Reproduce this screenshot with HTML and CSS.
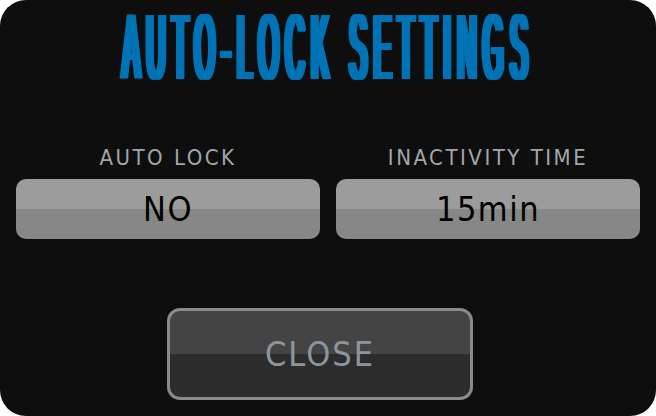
FILE: index.html
```html
<!DOCTYPE html>
<html>
<head>
<meta charset="utf-8">
<link rel="stylesheet" href="styles.css">
</head>
<body>
<div class="panel">
  <h1 class="title">
    <svg class="title-svg" width="656" height="89" viewBox="0 0 656 89">
      <defs>
        <filter id="widen" x="-5%" y="-10%" width="110%" height="120%">
          <feMorphology operator="dilate" radius="2.75 0"/>
        </filter>
      </defs>
      <text class="title-text" x="328.4" y="79.2" text-anchor="middle" textLength="412" lengthAdjust="spacingAndGlyphs" filter="url(#widen)">AUTO-LOCK SETTINGS</text>
    </svg>
  </h1>
  <div class="fields">
    <div class="field">
      <div class="label">AUTO LOCK</div>
      <div class="value">NO</div>
    </div>
    <div class="field">
      <div class="label">INACTIVITY TIME</div>
      <div class="value">15min</div>
    </div>
  </div>
  <div class="actions">
    <button class="close">CLOSE</button>
  </div>
</div>
</body>
</html>
```
FILE: styles.css
```css
html, body {
  margin: 0;
  padding: 0;
  background: #ffffff;
}
.panel {
  width: 656px;
  height: 416px;
  box-sizing: border-box;
  background: #0e0e0e;
  border-radius: 26px;
  overflow: hidden;
  display: flex;
  flex-direction: column;
}
.title {
  margin: 0;
  height: 89px;
  line-height: 0;
}
.title-svg {
  display: block;
}
.title-text {
  font-family: "Liberation Sans", Arial, sans-serif;
  font-weight: 400;
  font-size: 92px;
  letter-spacing: 24px;
  fill: #0072b6;
}
.fields {
  margin-top: 58px;
  padding: 0 16px;
  display: flex;
  gap: 16px;
}
.field {
  flex: 1;
  display: flex;
  flex-direction: column;
  align-items: center;
}
.label {
  font-family: "DejaVu Sans Condensed", "DejaVu Sans", sans-serif;
  font-size: 22px;
  line-height: 1;
  letter-spacing: 2.5px;
  color: #a3a6aa;
  height: 22px;
}
.value {
  margin-top: 9.6px;
  width: 100%;
  height: 60px;
  border-radius: 10px;
  background: linear-gradient(#9c9c9c 0, #9c9c9c 50%, #878787 50%, #878787 100%);
  display: flex;
  align-items: center;
  justify-content: center;
  font-family: "DejaVu Sans Condensed", "DejaVu Sans", sans-serif;
  font-size: 34px;
  line-height: 1;
  letter-spacing: 1.5px;
  color: #000000;
}
.actions {
  margin-top: 69px;
  display: flex;
  justify-content: center;
  padding-right: 16px;
}
.close {
  width: 306px;
  height: 92px;
  box-sizing: border-box;
  border: 3px solid #8a8a8a;
  border-radius: 13px;
  background: linear-gradient(#444444 0, #444444 50%, #2c2c2c 50%, #2c2c2c 100%);
  font-family: "DejaVu Sans Condensed", "DejaVu Sans", sans-serif;
  font-size: 34px;
  line-height: 1;
  letter-spacing: 2px;
  color: #8b959d;
  padding: 0;
  display: flex;
  align-items: center;
  justify-content: center;
}
```
